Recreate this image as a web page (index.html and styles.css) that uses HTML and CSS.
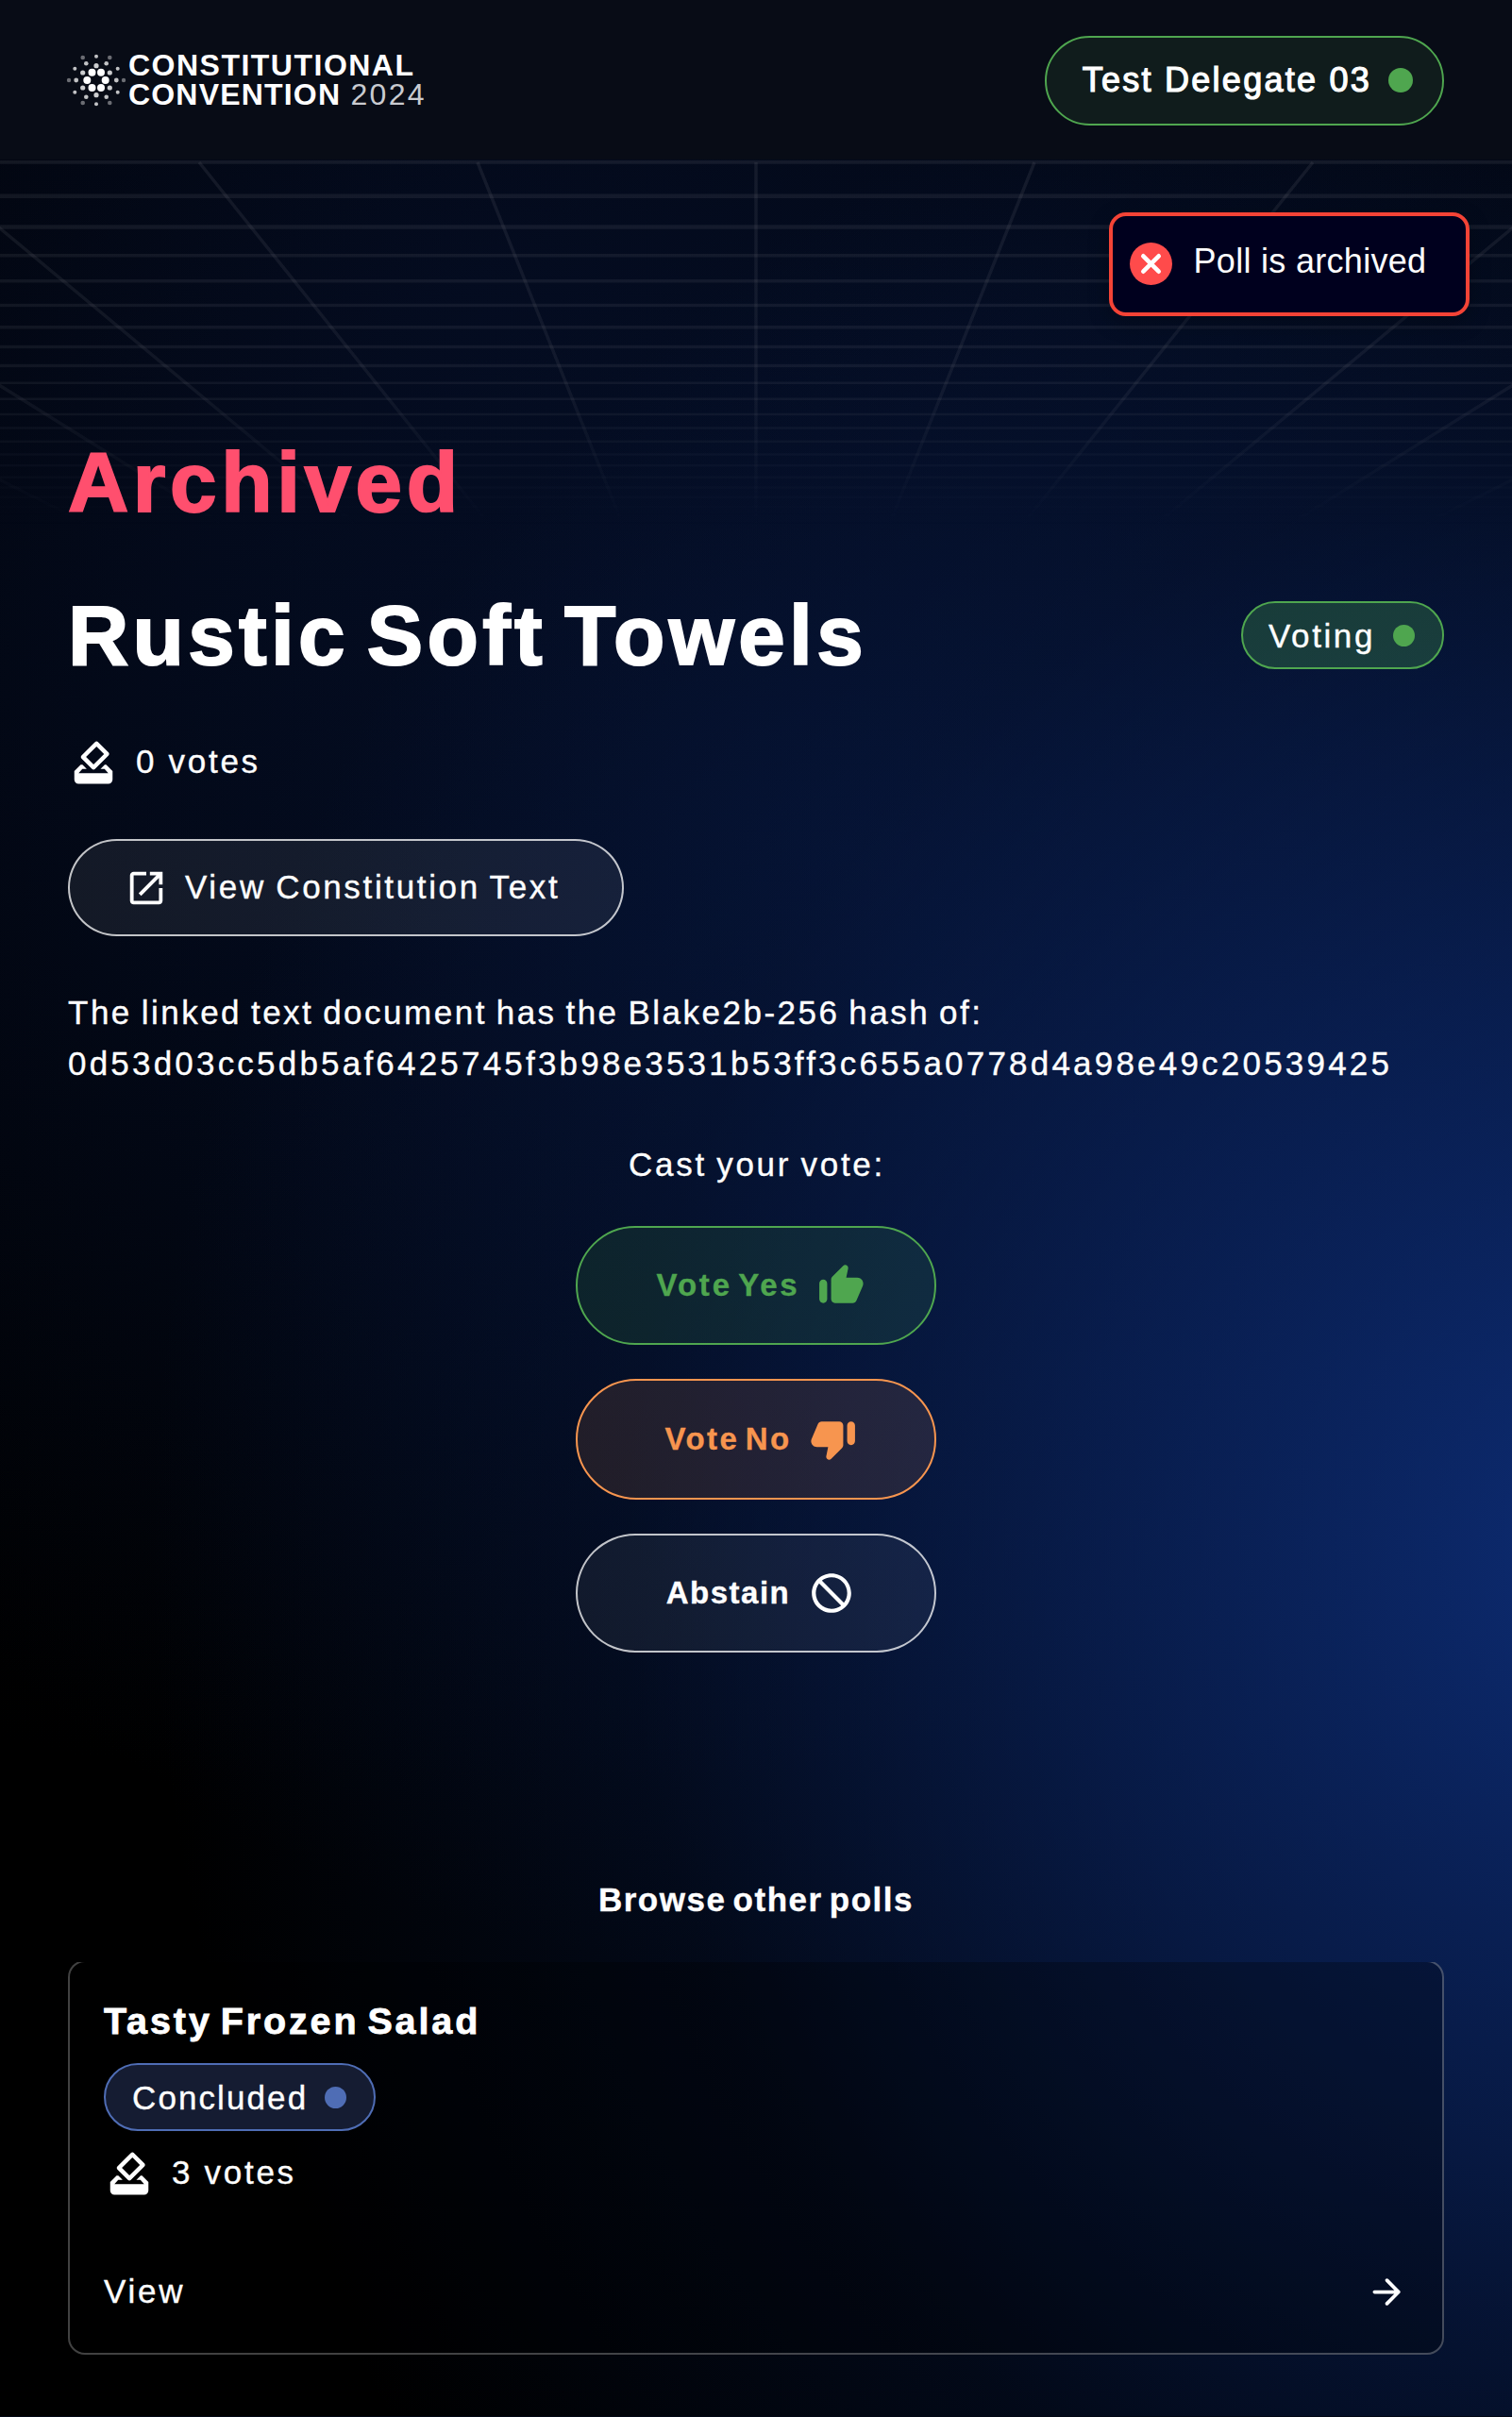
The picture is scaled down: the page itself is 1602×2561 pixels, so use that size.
FILE: index.html
```html
<!DOCTYPE html>
<html lang="en">
<head>
<meta charset="utf-8">
<title>Rustic Soft Towels</title>
<link rel="stylesheet" href="styles.css">
</head>
<body>
<svg width="0" height="0" class="defs">
  <symbol id="ballot" viewBox="0 0 24 24"><path d="M18 13h-.68l-2 2h1.91L19 17H5l1.78-2h2.05l-2-2H6l-3 3v4c0 1.1.89 2 1.99 2H19c1.1 0 2-.89 2-2v-4zm-1-5.05-4.95 4.95-3.54-3.54 4.95-4.95zm-4.24-5.66L6.39 8.66c-.39.39-.39 1.02 0 1.41l4.95 4.95c.39.39 1.02.39 1.41 0l6.36-6.36c.39-.39.39-1.02 0-1.41L14.16 2.3c-.38-.4-1.01-.4-1.4-.01z"/></symbol>
  <symbol id="thumb" viewBox="0 0 24 24"><path d="M13.12 2.06 7.58 7.6c-.37.37-.58.88-.58 1.41V19c0 1.1.9 2 2 2h9c.8 0 1.52-.48 1.84-1.21l3.26-7.61C23.94 10.2 22.49 8 20.34 8h-5.65l.95-4.58c.1-.5-.05-1.01-.41-1.37-.59-.58-1.53-.58-2.11.01zM3 21c1.1 0 2-.9 2-2v-8c0-1.1-.9-2-2-2s-2 .9-2 2v8c0 1.1.9 2 2 2z"/></symbol>
</svg>
<div class="page">
  <svg class="grid" viewBox="0 0 1602 400" width="1602" height="400">
    <defs>
      <linearGradient id="fade" x1="0" y1="0" x2="0" y2="400" gradientUnits="userSpaceOnUse">
        <stop offset="0" stop-color="#fff"/><stop offset=".6" stop-color="#fff" stop-opacity=".8"/><stop offset=".97" stop-color="#fff" stop-opacity="0"/>
      </linearGradient>
      <mask id="fademask"><rect width="1602" height="400" fill="url(#fade)"/></mask>
    </defs>
    <g mask="url(#fademask)" fill="none" stroke="#8f8c96" stroke-opacity=".125">
      <path stroke-width="4.5" d="M0 1.5H1602M0 37.7H1602M0 70.5H1602"/>
      <path stroke-width="3.5" d="M0 100.8H1602M0 127.7H1602M0 153.5H1602M0 176.7H1602M0 197.5H1602M0 217.5H1602"/>
      <path stroke-width="2.5" d="M0 235.8H1602M0 252.8H1602M0 269H1602M0 283.5H1602M0 297.8H1602M0 311.4H1602M0 323.2H1602M0 335.8H1602M0 346.4H1602M0 356.8H1602M0 366.8H1602M0 376H1602M0 384.4H1602"/>
      <path stroke-width="3.5" d="M801 2V384M506 2L659 384M211 2L517 384M-84 2L375 384M-379 2L233 384M-674 2L91 384M1096 2L943 384M1391 2L1085 384M1686 2L1227 384M1981 2L1369 384M2276 2L1511 384"/>
    </g>
  </svg>

  <header class="topbar">
    <svg class="logo" viewBox="0 0 400 62" width="400" height="62" fill="#fff">
      <g transform="translate(31 31)">
        <g><circle cx="-4.5" cy="-8.3" r="4"/><circle cx="5" cy="-8.3" r="4"/><circle cx="-9.7" cy="0" r="4"/><circle cx="9.7" cy="0" r="4"/><circle cx="-4.5" cy="8" r="4"/><circle cx="5" cy="8" r="4"/></g>
        <g opacity=".8"><circle cx="-14.3" cy="-8" r="2.6"/><circle cx="14.3" cy="-8" r="2.6"/><circle cx="-14.3" cy="8" r="2.6"/><circle cx="14.3" cy="8" r="2.6"/><circle cy="-15.3" r="2.6"/><circle cy="15.7" r="2.6"/></g>
        <g opacity=".75"><circle cx="-21.3" r="2.4"/><circle cx="21.3" r="2.4"/><circle cx="-10.7" cy="-17.7" r="2.3"/><circle cx="10.7" cy="-17.7" r="2.3"/><circle cx="-10.7" cy="17.7" r="2.3"/><circle cx="10.7" cy="17.7" r="2.3"/></g>
        <g opacity=".75"><circle cx="-22.7" cy="-12.3" r="2"/><circle cx="22.7" cy="-12.3" r="2"/><circle cx="-22.7" cy="12.7" r="2"/><circle cx="22.7" cy="12.7" r="2"/><circle cy="-25.3" r="2"/><circle cy="25.3" r="2"/></g>
        <g opacity=".4"><circle cx="-14.3" cy="-24" r="2.3"/><circle cx="14.3" cy="-24" r="2.3"/><circle cx="-14.3" cy="24" r="2.3"/><circle cx="14.3" cy="24" r="2.3"/><circle cx="-29" r="2.2"/><circle cx="29" r="2.2"/></g>
      </g>
      <text class="logo-bold" x="65" y="26.3" textLength="302">CONSTITUTIONAL</text>
      <text class="logo-bold" x="65" y="57.3" textLength="224">CONVENTION</text>
      <text class="logo-light" x="300.500" y="57.3" textLength="78">2024</text>
    </svg>
    <div class="pill user"><span>Test Delegate 03</span><i class="dot"></i></div>
  </header>

  <div class="toast">
    <svg viewBox="0 0 45 45" width="45" height="45"><circle cx="22.500" cy="22.500" r="22.500" fill="#ff4b4b"/><path d="M14.300 14.300l16.400 16.400M30.700 14.300L14.300 30.700" stroke="#fff" stroke-width="4.600" stroke-linecap="round"/></svg>
    <span>Poll is archived</span>
  </div>

  <main class="content">
    <h1 class="title archived">Archived</h1>
    <div class="title-row">
      <h1 class="title name">Rustic Soft Towels</h1>
      <div class="pill status voting"><span>Voting</span><i class="dot"></i></div>
    </div>
    <div class="votes"><svg width="54" height="54"><use href="#ballot"/></svg><span>0 votes</span></div>
    <a class="doc-link">
      <svg viewBox="0 0 24 24" width="46" height="46"><path d="M19 19H5V5h7V3H5c-1.110 0-2 .9-2 2v14c0 1.100.89 2 2 2h14c1.100 0 2-.9 2-2v-7h-2zM14 3v2h3.590l-9.830 9.830 1.410 1.410L19 6.410V10h2V3z"/></svg>
      <span>View Constitution Text</span>
    </a>
    <p class="hash"><span class="hash-label">The linked text document has the Blake2b-256 hash of:</span><span class="hash-value">0d53d03cc5db5af6425745f3b98e3531b53ff3c655a0778d4a98e49c20539425</span></p>
    <p class="cast">Cast your vote:</p>
    <div class="choices">
      <button class="choice yes"><span>Vote Yes</span><svg width="50" height="50"><use href="#thumb"/></svg></button>
      <button class="choice no"><span>Vote No</span><svg class="down" width="50" height="50"><use href="#thumb"/></svg></button>
      <button class="choice abstain"><span>Abstain</span><svg class="block" viewBox="0 0 24 24" width="50" height="50"><path d="M12 2C6.480 2 2 6.480 2 12s4.480 10 10 10 10-4.480 10-10S17.520 2 12 2M4 12c0-4.420 3.580-8 8-8 1.850 0 3.550.63 4.900 1.690L5.690 16.900C4.630 15.550 4 13.850 4 12m8 8c-1.850 0-3.550-.63-4.900-1.690L18.310 7.100C19.370 8.450 20 10.150 20 12c0 4.420-3.580 8-8 8"/></svg></button>
    </div>
    <h2 class="browse">Browse other polls</h2>
    <div class="polls">
      <article class="card">
        <h3>Tasty Frozen Salad</h3>
        <div class="pill status concluded"><span>Concluded</span><i class="dot"></i></div>
        <div class="votes"><svg width="54" height="54"><use href="#ballot"/></svg><span>3 votes</span></div>
        <div class="view"><span>View</span><svg viewBox="0 0 24 24" width="45" height="45"><path d="M5 13h11.170l-4.880 4.880c-.39.39-.39 1.030 0 1.420.39.39 1.020.39 1.410 0l6.590-6.590c.39-.39.39-1.020 0-1.410l-6.580-6.600c-.39-.39-1.020-.39-1.410 0s-.39 1.020 0 1.410L16.170 11H5c-.55 0-1 .45-1 1s.45 1 1 1"/></svg></div>
      </article>
    </div>
  </main>
</div>
</body>
</html>
```
FILE: styles.css
```css
* { box-sizing: border-box; }

body {
  margin: 0;
  background: #020815;
  color: #fff;
  font-family: "Liberation Sans", Arial, sans-serif;
  font-size: 35px;
  line-height: 54px;
}

h1, h2, h3, p { margin: 0; }
svg { display: block; flex: none; fill: currentColor; overflow: visible; }
.defs { position: absolute; }

.page {
  position: relative;
  height: 2560px;
  overflow: hidden;
  background:
    radial-gradient(ellipse 1580px 1700px at 1740px 1640px, rgba(14, 48, 126, 0.92) 0%, rgba(12, 42, 112, 0.6) 38%, rgba(10, 36, 96, 0.25) 68%, rgba(10, 36, 96, 0) 100%),
    radial-gradient(ellipse 1300px 1200px at 900px 900px, rgba(8, 28, 76, 0.42) 0%, rgba(8, 28, 76, 0.22) 50%, rgba(8, 28, 76, 0) 100%),
    radial-gradient(ellipse 1900px 1600px at 500px 300px, #030816 0%, #000 100%);
}

.grid { position: absolute; left: 0; top: 170px; }

.topbar {
  position: relative;
  display: flex;
  align-items: center;
  justify-content: space-between;
  height: 169px;
  padding: 1px 72px 0 71px;
  background: #080c16;
}

.logo-bold { font-size: 32px; font-weight: 700; }
.logo-light { font-size: 32px; fill: #c9cbd0; }

.pill {
  display: flex;
  align-items: center;
  border: 2px solid;
  border-radius: 60px;
  width: max-content;
}
.pill span { color: #fff; white-space: nowrap; }
.dot { flex: none; border-radius: 50%; background: currentColor; }

.user {
  height: 95px;
  padding: 0 31px 0 38px;
  gap: 18px;
  color: #4fa64f;
  background: #101c1c;
  font-size: 36px;
  letter-spacing: 2.25px;
}
.user span { -webkit-text-stroke: 1.2px #fff; }
.user .dot { width: 26px; height: 26px; }

.toast {
  position: absolute;
  left: 1174.5px;
  top: 225px;
  width: 382.5px;
  height: 110px;
  display: flex;
  align-items: center;
  gap: 23px;
  padding: 0 0 2px 18px;
  border: 4.5px solid #f44336;
  border-radius: 18px;
  background: #00001e;
  box-shadow: 0 7px 22px rgba(0, 0, 0, 0.25);
  font-size: 36px;
  letter-spacing: 0.3px;
}
.toast span { position: relative; top: -2px; }

.content {
  position: relative;
  padding: 288px 72px 0;
  -webkit-text-stroke: 0.35px;
}

.title { font-size: 89px; line-height: 108px; font-weight: 700; }
.archived { color: #ff4f6e; letter-spacing: 4.6px; -webkit-text-stroke: 2px #ff4f6e; }
.name { letter-spacing: 4.3px; word-spacing: -10px; -webkit-text-stroke: 2px #fff; }

.title-row {
  display: flex;
  align-items: center;
  justify-content: space-between;
  margin-top: 54px;
}

.status { height: 72px; padding: 0 28px; gap: 19px; line-height: 67px; }
.status .dot { width: 23px; height: 23px; }
.voting { color: #4fa64f; background: rgba(76, 175, 80, 0.27); letter-spacing: 2.6px; padding: 0 29px 0 27px; }
.concluded { color: #4f6db5; background: #151c32; letter-spacing: 2.1px; padding-right: 29px; }
.concluded .dot { margin-left: -1px; }

.votes {
  display: flex;
  align-items: center;
  gap: 18px;
  height: 54px;
  letter-spacing: 2.7px;
}
.votes span { margin-top: -2px; }
.title-row + .votes { margin-top: 54px; }

.doc-link {
  display: flex;
  align-items: center;
  gap: 18px;
  width: 589px;
  height: 103px;
  margin-top: 54px;
  padding-left: 58px;
  border: 2px solid rgba(255, 255, 255, 0.75);
  border-radius: 52px;
  background: rgba(255, 255, 255, 0.07);
  letter-spacing: 2.65px;
  word-spacing: -2px;
  white-space: nowrap;
}
.doc-link span { margin-top: -2px; }

.hash { display: flex; flex-direction: column; margin-top: 54px; }
.hash-label { letter-spacing: 2.5px; word-spacing: -2.4px; }
.hash-value { letter-spacing: 3.2px; }

.cast { margin-top: 53px; text-indent: 2px; text-align: center; letter-spacing: 2.7px; word-spacing: -2px; }

.choices {
  display: flex;
  flex-direction: column;
  align-items: center;
  gap: 36px;
  margin-top: 38px;
}
.choice {
  display: flex;
  align-items: center;
  justify-content: center;
  gap: 19px;
  width: 382px;
  height: 126px;
  padding: 0 0 0 10px;
  border: 2px solid;
  border-radius: 64px;
  font: 700 33px/54px "Liberation Sans", Arial, sans-serif;
}
.yes { color: #4fa64f; background: rgba(76, 175, 80, 0.13); letter-spacing: 2.8px; word-spacing: -5px; }
.no { color: #f7954f; background: rgba(247, 149, 79, 0.12); height: 128px; letter-spacing: 2.4px; word-spacing: -5px; }
.abstain { color: #fff; background: rgba(255, 255, 255, 0.06); border-color: rgba(255, 255, 255, 0.75); height: 126px; letter-spacing: 1.5px; }
.down { transform: rotate(180deg); }
.block { transform: scaleX(-1); }

.browse {
  margin-top: 235px;
  text-align: center;
  font-size: 35px;
  line-height: 54px;
  letter-spacing: 1.5px;
  word-spacing: -4px;
}

/* The list clips the card's top border. */
.polls { margin-top: 39px; overflow: hidden; }
.card {
  height: 418px;
  margin-top: -2px;
  padding: 32px 36px 0;
  border: 2px solid rgba(255, 255, 255, 0.26);
  border-radius: 18px;
  background: rgba(0, 0, 0, 0.28);
}
.card h3 { font-size: 39.5px; line-height: 60px; letter-spacing: 2.9px; word-spacing: -5px; -webkit-text-stroke: 0.8px #fff; }
.card .status { margin-top: 15px; }
.card .votes { margin-top: 18px; }
.view {
  display: flex;
  align-items: center;
  justify-content: space-between;
  margin-top: 71px;
  letter-spacing: 2.8px;
}
```
